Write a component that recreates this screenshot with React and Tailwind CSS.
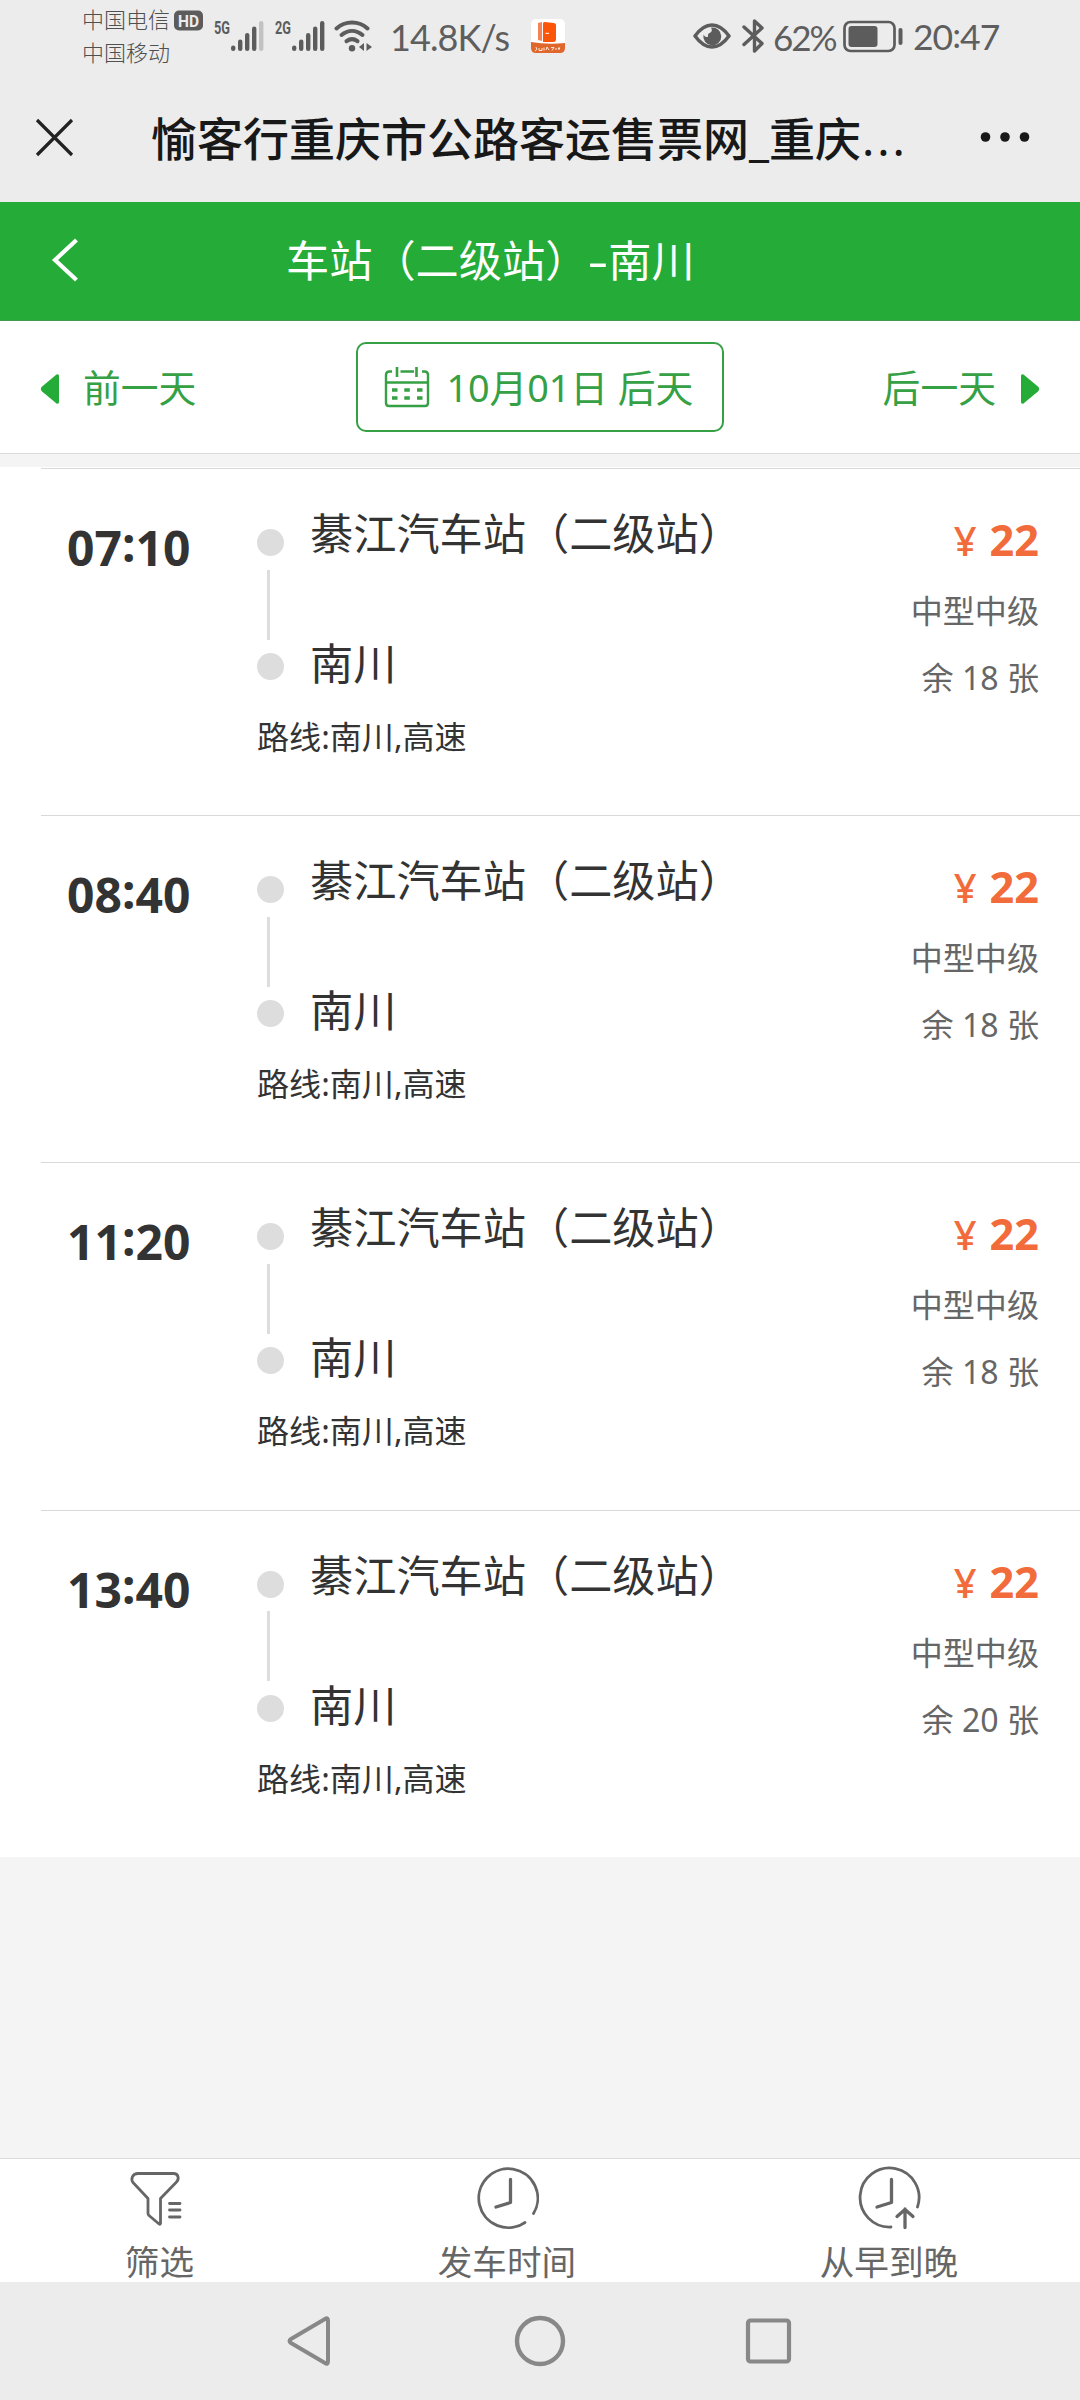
import React from "react";

const trips = [
  { time: "07:10", seats: 18 },
  { time: "08:40", seats: 18 },
  { time: "11:20", seats: 18 },
  { time: "13:40", seats: 20 },
];

function Signal({ label, weak }) {
  return (
    <svg width="52" height="44" viewBox="0 -10 52 44" fill="#5c5c5c">
      <text x="0" y="15" fontFamily="Roboto, sans-serif" fontWeight="700" fontSize="18.5" textLength="16" lengthAdjust="spacingAndGlyphs">{label}</text>
      <rect x="17" y="26.500" width="4.400" height="5.500" rx="2.200" />
      <rect x="24" y="20.500" width="4.400" height="11.500" rx="2.200" />
      <rect x="31" y="14" width="4.400" height="18" rx="2.200" />
      <rect x="38" y="7.500" width="4.400" height="24.500" rx="2.200" />
      <rect x="45" y="2" width="4.400" height="30" rx="2.200" fill={weak ? "#c2c2c2" : "#5c5c5c"} />
    </svg>
  );
}

function StatusBar() {
  return (
    <div className="flex h-[80px] items-start text-[#5e5e5e]">
      <div className="ml-[82px] mt-[3px] w-[92px] text-[22px] leading-[33px] font-light text-[#505050]">
        <div className="flex whitespace-nowrap">中国电信</div>
        <div className="whitespace-nowrap">中国移动</div>
      </div>
      <svg className="mt-[10px]" width="30" height="21" viewBox="0 0 30 21">
        <rect x="0" y="0.500" width="29" height="20" rx="5" fill="#5c5c5c" />
        <text x="4" y="16.500" fontFamily="Roboto, sans-serif" fontWeight="700" fontSize="17" fill="#ececec" textLength="21" lengthAdjust="spacingAndGlyphs">HD</text>
      </svg>
      <div className="ml-[10px] mt-[9px]"><Signal label="5G" weak /></div>
      <div className="ml-[9px] mt-[9px]"><Signal label="2G" /></div>
      <svg className="ml-[7px] mt-[19px]" width="40" height="34" viewBox="0 0 40 34" fill="none" stroke="#5c5c5c" strokeWidth="4" strokeLinecap="round">
        <path d="M2.500 9.500C11 1.500 25 1.500 33.500 9.500" />
        <path d="M7.500 16C14 10.500 22 10.500 28.500 16" />
        <path d="M12.500 22.200C16 19.600 20 19.600 23.500 22.200" />
        <circle cx="18" cy="29.300" r="3.200" fill="#5c5c5c" stroke="none" />
        <path d="M30 24v8l-5-4zM32.500 24v8l5.500-4z" fill="#5c5c5c" stroke="none" />
      </svg>
      <div className="ml-[16px] mt-[12px] w-[141px] whitespace-nowrap text-[36px] leading-[50px] tracking-[-0.900px] font-['Lato']">14.8K/s</div>
      <svg className="mt-[19px]" width="34" height="34" viewBox="0 0 34 34">
        <rect width="34" height="34" rx="5" fill="#fff" />
        <path d="M7 4l4-1v19l-4-1z" fill="#f5835a" />
        <path d="M12 4.500q0-1.500 1.500-1.500l9.500 1q2 0.300 2 2v14q0 3-2.500 3H12z" fill="#fb5607" />
        <path d="M14.500 14.300h3.500" stroke="#fff" strokeWidth="1" />
        <path d="M0 23q17 3 34 1v5q0 5-5 5H5q-5 0-5-5z" fill="#e0672b" />
        <path d="M5 28q2 3-1 4M8 29v2.500h3V29M13 28.500v3M15 31l1-3 2 3M20 28.500h3l-2 3M24 30h2M28 28v3M27 29.500h2" stroke="#ffe6d8" strokeWidth="1" fill="none" />
      </svg>
      <svg className="ml-[128px] mt-[22px]" width="38" height="28" viewBox="0 0 38 28">
        <path d="M2 14Q10 3 19 3t17 11Q28 25 19 25T2 14z" fill="none" stroke="#5c5c5c" strokeWidth="3.500" strokeLinejoin="round" />
        <path d="M18 5.500a9 9 0 1 1-7.500 7q1.500 3.300 4.500 2.300-.5-3.500 2.200-4.100Q20 9 18 5.500z" fill="#5c5c5c" />
      </svg>
      <svg className="ml-[11px] mt-[18px]" width="23" height="36" viewBox="0 0 23 36" fill="none" stroke="#5c5c5c" strokeWidth="3.400" strokeLinejoin="round" strokeLinecap="round">
        <path d="M2 9L20 25.500L12.500 33V3L20 10L2 26.500" />
      </svg>
      <div className="ml-[8px] mt-[12px] w-[70px] whitespace-nowrap text-[35px] leading-[50px] tracking-[-2px] font-['Lato']">62%</div>
      <svg className="mt-[20px]" width="60" height="33" viewBox="0 0 60 33">
        <rect x="1.500" y="2" width="50" height="29" rx="6" fill="none" stroke="#5c5c5c" strokeWidth="2.700" />
        <rect x="5.500" y="6" width="29" height="21" rx="3" fill="#5c5c5c" />
        <rect x="55.500" y="8" width="4" height="17" rx="2" fill="#5c5c5c" />
      </svg>
      <div className="ml-[10px] mt-[12px] whitespace-nowrap text-[35.500px] leading-[50px] tracking-[-1px] font-['Lato']">20<span className="inline-block -translate-y-[2px]">:</span>47</div>
    </div>
  );
}

function TitleBar() {
  return (
    <div className="flex h-[122px] items-center">
      <svg className="ml-[35px] -mt-[7px]" width="39" height="39" viewBox="0 0 39 39" stroke="#222" strokeWidth="3.200">
        <path d="M2 2L37 37M37 2L2 37" />
      </svg>
      <div className="ml-[77px] w-[790px] whitespace-nowrap text-[46px] leading-[60px] font-medium text-[#181818] -translate-y-[3px]">愉客行重庆市公路客运售票网_重庆<span className="ml-[1px] font-normal tracking-[3px]">...</span></div>
      <svg className="ml-[39px] -mt-[8px]" width="50" height="12" viewBox="0 0 50 12" fill="#181818">
        <circle cx="5.500" cy="6" r="4.800" />
        <circle cx="25" cy="6" r="4.800" />
        <circle cx="44.500" cy="6" r="4.800" />
      </svg>
    </div>
  );
}

function RouteHeader() {
  return (
    <div className="flex h-[119px] items-center border-b border-[#419a50] bg-[#25ab38] text-white">
      <svg className="ml-[50px] -mt-[2px]" width="30" height="44" viewBox="0 0 30 44" fill="none" stroke="#fff" strokeWidth="4.200">
        <path d="M26.500 2L5 22L26.500 42" />
      </svg>
      <div className="ml-[206px] whitespace-nowrap text-[43.200px] leading-[60px]">车站（二级站）<span className="inline-block w-[20px] text-center scale-x-150">-</span>南川</div>
    </div>
  );
}

function Calendar() {
  return (
    <svg width="46" height="42" viewBox="0 0 46 42" fill="none" stroke="#36a045" strokeWidth="2.400">
      <path d="M8 5.500H5.500Q2 5.500 2 9v28Q2 40 5 40h36q3 0 3-3V9q0-3.500-3.500-3.500H38M16.500 5.500H30M2 16.500H44" />
      <path d="M13 1v10M32.500 1v10" strokeWidth="2.600" />
      <path d="M8 24h5.500M20.300 24h5.500M33 24h5.500M8 32h5.500M20.300 32h5.500M33 32h5.500" strokeWidth="3.600" />
    </svg>
  );
}

function DateBar() {
  return (
    <div className="flex h-[133px] items-start justify-between border-b border-[#dadada] bg-white pl-[40px] pr-[40px] text-[37.800px] leading-[50px] text-[#36a045]">
      <div className="mt-[42px] flex items-center">
        <svg className="translate-y-[1px]" width="20" height="32" viewBox="0 0 20 32" fill="#25ab38"><path d="M1.500 14L16.500 1.500Q19 .5 19 3v26q0 2.500-2.500 1.500L1.500 18Q0 16 1.500 14z" /></svg>
        <span className="ml-[23px]">前一天</span>
      </div>
      <div className="mt-[21px] flex h-[90px] w-[368px] items-center rounded-[10px] border-2 border-[#36a045] pl-[26px]">
        <Calendar />
        <span className="ml-[17px] mt-[2px] whitespace-nowrap tracking-[-0.100px]">10月01日 后天</span>
      </div>
      <div className="mt-[42px] flex items-center">
        <span className="mr-[24px]">后一天</span>
        <svg className="translate-y-[1px]" width="20" height="32" viewBox="0 0 20 32" fill="#25ab38"><path d="M18.500 14L3.500 1.500Q1 .5 1 3v26q0 2.500 2.500 1.500L18.500 18q1.500-2 0-4z" /></svg>
      </div>
    </div>
  );
}

function Trip({ time, seats }) {
  const [hours, minutes] = time.split(":");
  return (
    <div className="ml-[41px] flex h-[347.200px] border-t border-[#d9d9d9] pr-[41px] text-[#333]">
      <div className="w-[216px] pl-[26px] pt-[55px] text-[48px] leading-[48px] font-bold">
        {hours}<span className="inline-block -translate-y-[4px]">:</span>{minutes}
      </div>
      <div className="flex-1 pt-[40px]">
        <div className="flex">
          <div className="w-[27px] pt-[20px]">
            <div className="size-[27px] rounded-full bg-[#ddd]" />
            <div className="my-[13.500px] ml-[10px] h-[70px] w-[3px] bg-[#ddd]" />
            <div className="size-[27px] rounded-full bg-[#ddd]" />
          </div>
          <div className="ml-[26px] text-[43.200px] leading-[50px]">
            <div className="whitespace-nowrap">綦江汽车站（二级站）</div>
            <div className="mt-[80px]">南川</div>
          </div>
        </div>
        <div className="mt-[28px] text-[32.100px] leading-[40px]">路线:南川,高速</div>
      </div>
      <div className="flex flex-col items-end pt-[46px] text-[32.100px] leading-[40px] text-[#666]">
        <div className="flex items-baseline leading-[50px] text-[#f26b3a]">
          <span className="mr-[13px] text-[40px] font-medium">¥</span>
          <span className="text-[43.200px] font-bold">22</span>
        </div>
        <div className="mt-[25px]">中型中级</div>
        <div className="mt-[27px]">余 {seats} 张</div>
      </div>
    </div>
  );
}

function Tab({ label, children }) {
  return (
    <div className="flex flex-col items-center pt-[6px]">
      <svg width="64" height="66" viewBox="0 0 64 66" fill="none" stroke="#666" strokeWidth="2.800" strokeLinecap="round" strokeLinejoin="round">{children}</svg>
      <div className="mt-[11px] whitespace-nowrap text-[34.600px] leading-[40px] text-[#666]">{label}</div>
    </div>
  );
}

function BottomTabs() {
  return (
    <div className="flex h-[124px] justify-around border-t border-[#dadada] bg-white pl-[3px]">
      <Tab label="筛选">
        <path d="M11 8.500H46.500C51.500 8.500 52.500 14 49.500 17L33.500 33.500V58.500Q33 60 31.500 58.500L22 50.500Q21 49.500 21 48V33.500L6 17.500C3.500 14 5.500 8.500 11 8.500z" />
        <path d="M42.500 38.500h10.500M42.500 45h10.500M42.500 52h10.500" />
      </Tab>
      <Tab label="发车时间">
        <path d="M58.500 48.500A29.500 29.500 0 1 0 50 57.500" />
        <path d="M35.500 14.500V37.500L21 42" strokeWidth="3.300" />
      </Tab>
      <Tab label="从早到晚">
        <path d="M60.500 42A29.500 29.500 0 1 0 34 62" />
        <path d="M34.500 14.500V37.500L20 42M48 62.500V44M40 51.500L48 44.500L56 51.500" strokeWidth="3.300" />
      </Tab>
    </div>
  );
}

function SystemNav() {
  return (
    <div className="flex h-[118px] bg-[#ececec] pt-[32px]">
      <svg className="ml-[285px]" width="48" height="54" viewBox="0 0 48 54" fill="none" stroke="#888" strokeWidth="4" strokeLinejoin="round">
        <path d="M40 5Q43 3 43 7V47Q43 51 40 49L6 29Q3 27 6 25z" />
      </svg>
      <svg className="ml-[180px]" width="54" height="54" viewBox="0 0 54 54" fill="none" stroke="#888" strokeWidth="4.400">
        <circle cx="27" cy="27" r="23" />
      </svg>
      <svg className="ml-[178px]" width="48" height="54" viewBox="0 0 48 54" fill="none" stroke="#888" strokeWidth="4.200">
        <rect x="3" y="6.500" width="41" height="41" rx="2.500" />
      </svg>
    </div>
  );
}

export default function App() {
  return (
    <div className="flex h-[2400px] w-[1080px] flex-col overflow-hidden bg-[#f4f4f4] font-['Noto_Sans','Noto_Sans_CJK_SC',sans-serif]">
      <div className="bg-[#ececec]">
        <StatusBar />
        <TitleBar />
      </div>
      <RouteHeader />
      <DateBar />
      <div className="mt-[13px] bg-white pt-[1px]">
        {trips.map((trip) => <Trip key={trip.time} {...trip} />)}
      </div>
      <div className="flex-1" />
      <BottomTabs />
      <SystemNav />
    </div>
  );
}
